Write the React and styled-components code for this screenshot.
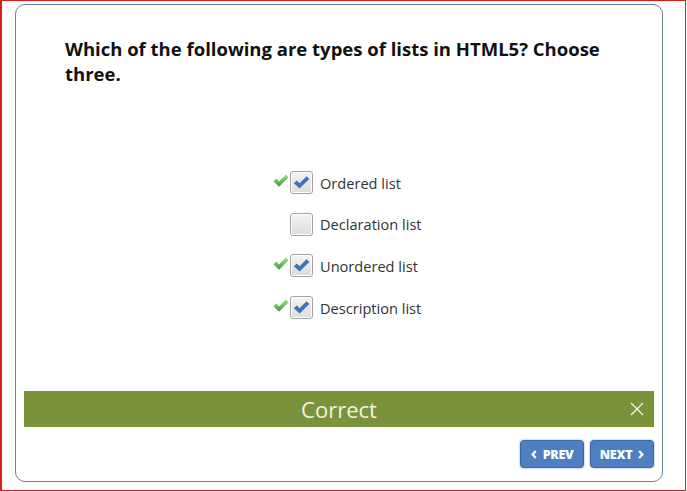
import React from "react";
import styled, { createGlobalStyle } from "styled-components";

const GlobalStyle = createGlobalStyle`
  body {
    margin: 0;
    background: #ffffff;
    font-family: "Open Sans", "Noto Sans", sans-serif;
  }
`;

const Frame = styled.div`
  box-sizing: border-box;
  width: 686px;
  height: 491px;
  border: 1px solid #e01b1b;
  border-left-width: 2px;
  padding: 3px 0 0 13px;
`;

const Card = styled.div`
  box-sizing: border-box;
  width: 648px;
  height: 478px;
  border: 1px solid #5f86a8;
  border-radius: 10px;
  display: flex;
  flex-direction: column;
  padding: 0 8px 0 8px;
`;

const Question = styled.h1`
  margin: 31px 0 0 41px;
  width: 560px;
  font-size: 18.5px;
  line-height: 25px;
  font-weight: 700;
  color: #111111;
`;

const Options = styled.div`
  margin: 85px 0 0 249px;
  display: flex;
  flex-direction: column;
  gap: 18.7px;
`;

const Option = styled.label`
  display: flex;
  align-items: center;
  height: 23px;
  font-size: 14.6px;
  color: #333333;
`;

const Mark = styled.span`
  width: 17px;
  height: 17px;
  display: flex;
  align-items: center;
  justify-content: flex-start;
  margin-top: -4px;
`;

const Box = styled.span`
  box-sizing: border-box;
  width: 23px;
  height: 23px;
  border: 1px solid #a3a3a3;
  border-radius: 3px;
  background: linear-gradient(#f4f4f4, #dcdcdc);
  box-shadow: inset 0 0 0 1px #ffffff;
  display: flex;
  align-items: center;
  justify-content: center;
  margin-right: 7px;
`;

const Feedback = styled.div`
  margin-top: 72px;
  height: 36px;
  background: #7a933b;
  display: flex;
  align-items: center;
  justify-content: center;
  position: relative;
  color: #f2f2e6;
  font-size: 22px;
`;

const Close = styled.span`
  position: absolute;
  right: 10px;
  top: 11px;
  width: 14px;
  height: 14px;
  display: flex;
`;

const Nav = styled.div`
  margin-top: 13px;
  display: flex;
  justify-content: flex-end;
  gap: 6px;
`;

const NavButton = styled.button`
  box-sizing: border-box;
  height: 28px;
  width: 64px;
  border: 1px solid #3c6a9f;
  border-radius: 4px;
  background: #4e80bf;
  box-shadow: 0 0 2px rgba(40, 70, 110, 0.6);
  color: #ffffff;
  font-family: "Open Sans", sans-serif;
  font-weight: 800;
  font-size: 12.5px;
  letter-spacing: -0.3px;
  display: flex;
  align-items: center;
  justify-content: center;
  gap: 6px;
  padding: 0;
`;

const GreenCheck = () => (
  <svg width="16" height="14" viewBox="0 0 16 14">
    <defs>
      <linearGradient id="gc" x1="0" y1="0" x2="0" y2="1">
        <stop offset="0" stopColor="#9be086" />
        <stop offset="1" stopColor="#3c9a38" />
      </linearGradient>
    </defs>
    <path d="M0.5 7.2 L3.4 4.6 L6 7.4 L12.8 0.6 L15.6 3.2 L6 12.8 Z" fill="url(#gc)" />
  </svg>
);

const BlueCheck = () => (
  <svg width="17" height="15" viewBox="0 0 16 14">
    <path d="M0.8 7.6 L3.6 5 L6.2 7.6 L12.8 1 L15.4 3.6 L6.2 12.6 Z" fill="#3f73b8" />
  </svg>
);

const Chevron = ({ left }) => (
  <svg width="6" height="9" viewBox="0 0 6 9">
    <path
      d={left ? "M4.8 1 L1.6 4.5 L4.8 8" : "M1.2 1 L4.4 4.5 L1.2 8"}
      stroke="#ffffff"
      strokeWidth="2.2"
      fill="none"
    />
  </svg>
);

const options = [
  { label: "Ordered list", checked: true },
  { label: "Declaration list", checked: false },
  { label: "Unordered list", checked: true },
  { label: "Description list", checked: true },
];

export default function App() {
  return (
    <>
      <GlobalStyle />
      <Frame>
        <Card>
          <Question>
            Which of the following are types of lists in HTML5? Choose three.
          </Question>
          <Options>
            {options.map((o) => (
              <Option key={o.label}>
                <Mark>{o.checked && <GreenCheck />}</Mark>
                <Box>{o.checked && <BlueCheck />}</Box>
                {o.label}
              </Option>
            ))}
          </Options>
          <Feedback>
            Correct
            <Close>
              <svg width="14" height="14" viewBox="0 0 14 14">
                <path d="M1 1 L13 13 M13 1 L1 13" stroke="#f2f2e6" strokeWidth="1.4" />
              </svg>
            </Close>
          </Feedback>
          <Nav>
            <NavButton>
              <Chevron left /> PREV
            </NavButton>
            <NavButton>
              NEXT <Chevron />
            </NavButton>
          </Nav>
        </Card>
      </Frame>
    </>
  );
}
